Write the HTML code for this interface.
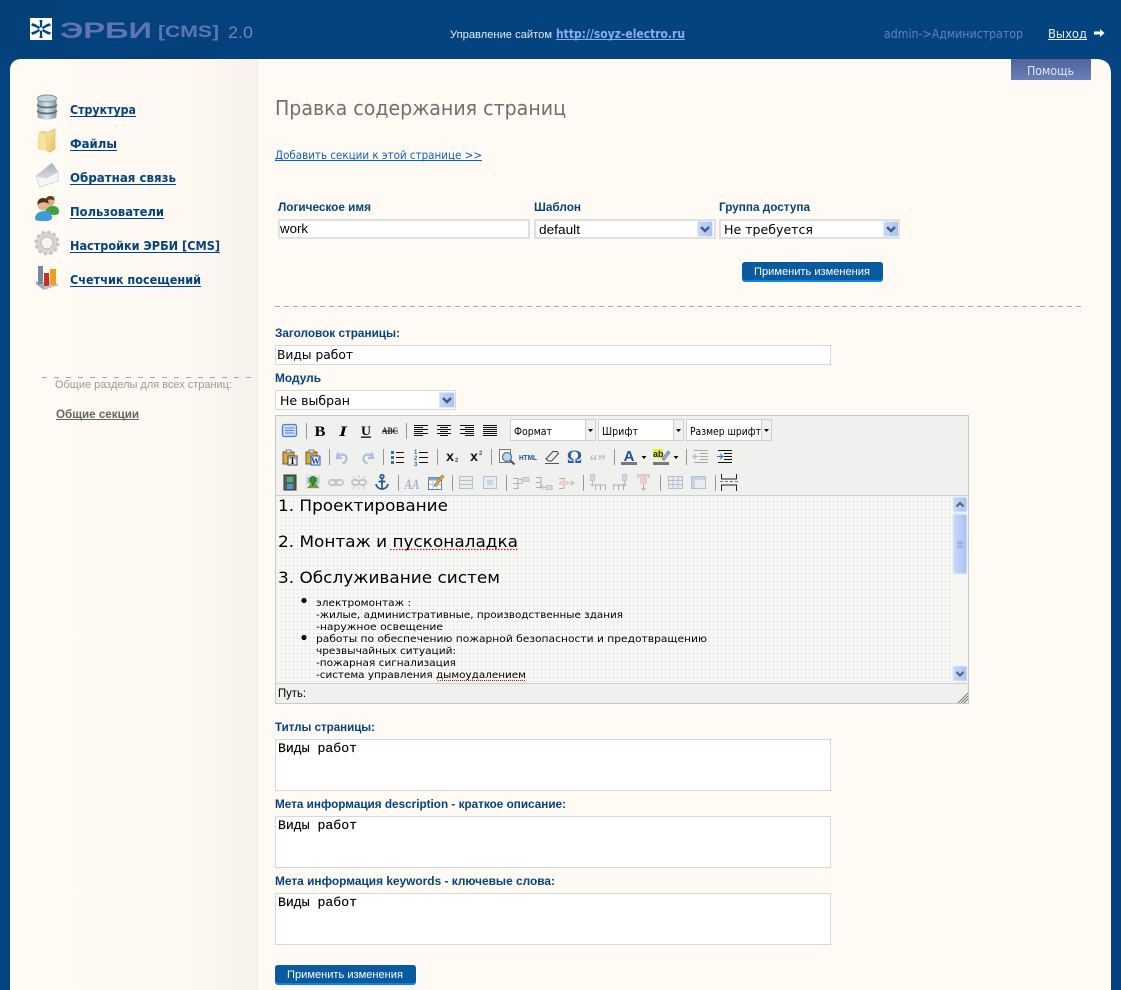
<!DOCTYPE html>
<html><head><meta charset="utf-8"><title>ЭРБИ CMS</title>
<style>
html,body{margin:0;padding:0;background:#03437f;overflow:hidden}
svg{display:block}
text{white-space:pre}
.a{font-family:"Liberation Sans",sans-serif}
.d{font-family:"DejaVu Sans",sans-serif}
.m{font-family:"Liberation Mono",monospace}
.s{font-family:"Liberation Serif",serif}
.lab{font-family:"Liberation Sans",sans-serif;font-weight:bold;font-size:12px;fill:#03437f}
.nav{font-family:"DejaVu Sans",sans-serif;font-weight:bold;font-size:12px;fill:#03437f}
.btn{font-family:"Liberation Sans",sans-serif;font-size:11px;fill:#fff}
.ta{font-family:"Liberation Mono",monospace;font-size:13px;fill:#000;stroke:#000;stroke-width:.15px}
.f{font-family:"DejaVu Sans",sans-serif;font-size:16px;fill:#000}
.sm{font-family:"DejaVu Sans",sans-serif;font-size:10px;fill:#000}
.sel{font-family:"DejaVu Sans",sans-serif;font-size:12px;fill:#000}
.ed{font-family:"DejaVu Sans",sans-serif;font-size:11px;fill:#000}
.dis{opacity:.42}
</style></head><body>
<svg xmlns="http://www.w3.org/2000/svg" width="1121" height="990" viewBox="0 0 1121 990">
<defs>
<linearGradient id="side" x1="0" x2="1" y1="0" y2="0"><stop offset="0" stop-color="#fffaf4"/><stop offset=".72" stop-color="#fdf8f2"/><stop offset="1" stop-color="#f5f1eb"/></linearGradient>
<linearGradient id="help" x1="0" x2="0" y1="0" y2="1"><stop offset="0" stop-color="#50639b"/><stop offset="1" stop-color="#6a80b8"/></linearGradient>
<linearGradient id="sb" x1="0" x2="1" y1="0" y2="0"><stop offset="0" stop-color="#c9daf9"/><stop offset="1" stop-color="#a9c1f1"/></linearGradient>
<linearGradient id="mtl" x1="0" x2="1" y1="0" y2="0"><stop offset="0" stop-color="#8fa3ad"/><stop offset=".5" stop-color="#dde5e9"/><stop offset="1" stop-color="#7f949f"/></linearGradient>
<linearGradient id="fold" x1="0" x2="1" y1="0" y2="1"><stop offset="0" stop-color="#fbe9a8"/><stop offset="1" stop-color="#e4c060"/></linearGradient>
<linearGradient id="env" x1="0" x2="0" y1="0" y2="1"><stop offset="0" stop-color="#a8b0b8"/><stop offset="1" stop-color="#f2f4f6"/></linearGradient>
<pattern id="dots" width="4" height="4" patternUnits="userSpaceOnUse"><rect width="4" height="4" fill="#f8f8f7"/><rect x="1" y="1" width="1" height="1" fill="#d2d2d2"/></pattern>
<symbol id="chev" viewBox="0 0 16 16" overflow="visible"><rect x=".5" y=".5" width="15" height="15" rx="1.500" fill="url(#sb)" stroke="#dfe8fb"/><path d="M4 6 8 10 12 6" fill="none" stroke="#465a80" stroke-width="2.400"/></symbol>
</defs>

<!-- header -->
<rect width="1121" height="990" fill="#03437f"/>
<path d="M0 0H300L210 59H0Z" fill="#04407a"/>
<path d="M60 0H310L230 30 120 59H70Z" fill="#064a88" opacity=".3"/>

<!-- panel -->
<path d="M10 990V71Q10 59 22 59H1096Q1111 59 1111 74V990Z" fill="#fffaf4"/>
<path d="M10 990V71Q10 59 22 59H258V990Z" fill="url(#side)"/>

<!-- logo -->
<rect x="30" y="18" width="22" height="22" fill="#fff"/>
<g fill="#03437f"><path d="M39.500 20h3L41 29zM39.500 38h3L41 29zM32.500 23l-1.500 2.500L41 29zM49.500 35l1.500-2.500L41 29zM49.500 23l1.500 2.500L41 29zM32.500 35 31 32.500 41 29z"/></g>
<g stroke="#03437f" stroke-width="2.200"><path d="M41 20.500V37.500M33.500 24.500 48.500 33.500M48.500 24.500 33.500 33.500"/></g>
<circle cx="41" cy="29" r="1.800" fill="#fff"/>
<text x="60" y="38" class="a" font-size="22" font-weight="bold" fill="#5f74b2" textLength="92" lengthAdjust="spacingAndGlyphs">ЭРБИ</text>
<text x="158" y="37" class="a" font-size="17" font-weight="bold" fill="#5f74b2" textLength="61" lengthAdjust="spacingAndGlyphs">[CMS]</text>
<text x="228" y="38" class="a" font-size="17" fill="#6f84bf" textLength="25" lengthAdjust="spacingAndGlyphs">2.0</text>

<!-- header text -->
<text x="450" y="38" class="a" font-size="11" fill="#e3e9f6" textLength="102" lengthAdjust="spacingAndGlyphs">Управление сайтом</text>
<text x="556" y="38" class="d" font-size="12" font-weight="bold" fill="#8cabf0" textLength="129" lengthAdjust="spacingAndGlyphs">http://soyz-electro.ru</text>
<rect x="556" y="39" width="129" height="1" fill="#8cabf0"/>
<text x="884" y="38" class="d" font-size="12" fill="#6580c0" textLength="139" lengthAdjust="spacingAndGlyphs">admin-&gt;Администратор</text>
<text x="1048" y="38" class="d" font-size="12" fill="#e8eefa" textLength="39" lengthAdjust="spacingAndGlyphs">Выход</text>
<rect x="1048" y="39" width="39" height="1" fill="#e8eefa"/>
<path d="M1094 31.500h6v-2.500l4.500 4-4.500 4v-2.500h-6z" fill="#fff"/>
<rect x="1011" y="59" width="80" height="21" fill="url(#help)"/>
<text x="1027" y="75" class="d" font-size="12" fill="#dfe5f3" textLength="47" lengthAdjust="spacingAndGlyphs">Помощь</text>

<!-- sidebar icons -->
<g><!-- database -->
<path d="M37.500 98.500v18c0 4 19 4 19 0v-18z" fill="url(#mtl)"/>
<ellipse cx="47" cy="98.500" rx="9.500" ry="3.500" fill="#c9d4da" stroke="#7e929d"/>
<path d="M37.500 104.500c0 4 19 4 19 0M37.500 110.500c0 4 19 4 19 0" fill="none" stroke="#56707e" stroke-width="1.800"/>
</g>
<g><!-- folder -->
<path d="M38 134 41 131h5v18l-6 1-2-1z" fill="#f0d47f"/>
<path d="M46 133 55 129v20l-5 3-4-2z" fill="url(#fold)" stroke="#d9b65a" stroke-width=".6"/>
<path d="M38 134H46V150H39Z" fill="#f8e39a"/>
</g>
<g><!-- mail -->
<path d="M36 176 52 163 58 172V181L40 187Z" fill="url(#env)" stroke="#aeb6bd" stroke-width=".5"/>
<path d="M36 176 46 178 58 172V181L40 187Z" fill="#f4f6f8" stroke="#c4cad0" stroke-width=".6"/>
</g>
<g><!-- users -->
<path d="M45 213c0-5 4-7 8-7s6 2 6 6c0 2-2 3-6 3z" fill="#3da23d"/>
<circle cx="50" cy="202" r="4.500" fill="#dcae84"/>
<path d="M45.500 201c0-3 2-5 5-5s4.500 2 4 5c-1-2-6-2-9 0z" fill="#5d3a20"/>
<path d="M35 219c0-6 5-8 10-8s7 3 7 7c0 2-3 3-8 3s-9 0-9-2z" fill="#3f9ad6"/>
<circle cx="43" cy="205" r="5.500" fill="#e2b68c"/>
<path d="M37.500 205c-.5-4 2-7 5.500-7s6 2 5.500 6c-2-2.500-8-2.500-11 1z" fill="#4c2f1a"/>
</g>
<g><!-- gear -->
<circle cx="47" cy="243" r="8.500" fill="none" stroke="#d6d6d6" stroke-width="5"/>
<circle cx="47" cy="243" r="11" fill="none" stroke="#c4c4c4" stroke-width="3" stroke-dasharray="3 2.760"/>
<circle cx="47" cy="243" r="6" fill="#f8f5f0" stroke="#b8b8b8"/>
</g>
<g><!-- chart -->
<path d="M36 284 52 280 59 285 44 290Z" fill="#b8c4cd"/>
<path d="M36 284 44 290V286L36 281Z" fill="#9aa8b3"/>
<rect x="38" y="266" width="5" height="18" fill="#76899a"/>
<rect x="44" y="273" width="5" height="13" fill="#c8311f"/>
<rect x="50" y="269" width="6" height="16" fill="#f0a01e"/>
</g>

<!-- sidebar links -->
<g class="nav">
<text x="70" y="114" class="nav" textLength="66" lengthAdjust="spacingAndGlyphs">Структура</text><rect x="70" y="116" width="66" height="1" fill="#03437f"/>
<text x="70" y="148" class="nav" textLength="47" lengthAdjust="spacingAndGlyphs">Файлы</text><rect x="70" y="150" width="47" height="1" fill="#03437f"/>
<text x="70" y="182" class="nav" textLength="106" lengthAdjust="spacingAndGlyphs">Обратная связь</text><rect x="70" y="184" width="106" height="1" fill="#03437f"/>
<text x="70" y="216" class="nav" textLength="94" lengthAdjust="spacingAndGlyphs">Пользователи</text><rect x="70" y="218" width="94" height="1" fill="#03437f"/>
<text x="70" y="250" class="nav" textLength="150" lengthAdjust="spacingAndGlyphs">Настройки ЭРБИ [CMS]</text><rect x="70" y="252" width="150" height="1" fill="#03437f"/>
<text x="70" y="284" class="nav" textLength="131" lengthAdjust="spacingAndGlyphs">Счетчик посещений</text><rect x="70" y="286" width="131" height="1" fill="#03437f"/>
</g>
<path d="M42 377.500H251" stroke="#a8a8a8" stroke-dasharray="5 7"/>
<text x="55" y="388" class="a" font-size="11" fill="#9a9a9a" textLength="177" lengthAdjust="spacingAndGlyphs">Общие разделы для всех страниц:</text>
<text x="56" y="418" class="a" font-size="12" font-weight="bold" fill="#666" textLength="83" lengthAdjust="spacingAndGlyphs">Общие секции</text>
<rect x="56" y="419" width="83" height="1" fill="#666"/>

<!-- main -->
<text x="275" y="115" class="d" font-size="20" fill="#707070" textLength="291" lengthAdjust="spacingAndGlyphs">Правка содержания страниц</text>
<text x="275" y="159" class="d" font-size="11.500" fill="#0b62c4" textLength="207" lengthAdjust="spacingAndGlyphs">Добавить секции к этой странице &gt;&gt;</text>
<rect x="275" y="160" width="207" height="1" fill="#0b62c4"/>

<text x="278" y="211" class="lab" textLength="93" lengthAdjust="spacingAndGlyphs">Логическое имя</text>
<text x="534" y="211" class="lab" textLength="47" lengthAdjust="spacingAndGlyphs">Шаблон</text>
<text x="719" y="211" class="lab" textLength="91" lengthAdjust="spacingAndGlyphs">Группа доступа</text>

<rect x="279" y="220" width="250" height="18" fill="#fff" stroke="#e0e0e0" stroke-width="2" />
<text x="280" y="233" class="a" font-size="13" fill="#000" textLength="28" lengthAdjust="spacingAndGlyphs">work</text>
<rect x="535" y="220" width="180" height="18" fill="#fff" stroke="#e0e0e0" stroke-width="2"/>
<text x="539" y="234" class="a" font-size="13" fill="#000" textLength="41" lengthAdjust="spacingAndGlyphs">default</text>
<use href="#chev" x="697" y="221" width="16" height="16"/>
<rect x="720" y="220" width="179" height="18" fill="#fff" stroke="#e0e0e0" stroke-width="2"/>
<text x="724" y="234" class="sel" textLength="89" lengthAdjust="spacingAndGlyphs">Не требуется</text>
<use href="#chev" x="883" y="221" width="16" height="16"/>

<rect x="742" y="262" width="141" height="20" rx="3" fill="#0a86e8"/>
<rect x="742" y="262" width="141" height="18" rx="3" fill="#0a5aa0"/>
<text x="754" y="275" class="btn" textLength="116" lengthAdjust="spacingAndGlyphs">Применить изменения</text>

<path d="M275 306.500H1084" stroke="#a9a9a9" stroke-dasharray="5 4"/>

<text x="275" y="337" class="lab" textLength="125" lengthAdjust="spacingAndGlyphs">Заголовок страницы:</text>
<rect x="275.500" y="345.500" width="555" height="19" fill="#fff" stroke="#d8d8d8"/>
<text x="277" y="359" class="sel" textLength="76" lengthAdjust="spacingAndGlyphs">Виды работ</text>
<text x="275" y="382" class="lab" textLength="46" lengthAdjust="spacingAndGlyphs">Модуль</text>
<rect x="275.500" y="390.500" width="180" height="19" fill="#fff" stroke="#d8d8d8"/>
<text x="280" y="405" class="sel" textLength="70" lengthAdjust="spacingAndGlyphs">Не выбран</text>
<use href="#chev" x="439" y="392" width="16" height="16"/>

<!-- editor -->
<rect x="275.500" y="415.500" width="693" height="288" fill="#f0f0ee" stroke="#c8c8c8"/>
<rect x="276" y="495" width="692" height="188" fill="url(#dots)"/>
<path d="M276 495.500H968M276 683.500H968" stroke="#cfcfcf"/>

<!-- separators -->
<path d="M306.500 423v16M406.500 423v16M329.500 449v16M383.500 449v16M437.500 449v16M491.500 449v16M614.500 449v16M686.500 449v16M398.500 475v16M452.500 475v16M506.500 475v16M583.500 475v16M660.500 475v16M715.500 475v16" stroke="#8f9a9f"/>

<!-- row 1 -->
<rect x="282.500" y="424.500" width="14" height="12" rx="2" fill="#cfdcf5" stroke="#4f7fc4" stroke-width="1.300"/>
<path d="M285 428h9M285 430.500h9M285 433h9" stroke="#5a8ad0"/>
<text x="320" y="436" text-anchor="middle" class="s" font-size="15" font-weight="bold" fill="#000" textLength="11" lengthAdjust="spacingAndGlyphs">B</text>
<text x="343" y="436" text-anchor="middle" class="s" font-size="15" font-weight="bold" font-style="italic" fill="#000" textLength="8" lengthAdjust="spacingAndGlyphs">I</text>
<text x="366" y="435" text-anchor="middle" class="s" font-size="13" font-weight="bold" fill="#000" textLength="10" lengthAdjust="spacingAndGlyphs">U</text><rect x="361" y="436.500" width="10" height="1.300" fill="#000"/>
<text x="390" y="434" text-anchor="middle" class="s" font-size="9" font-weight="bold" fill="#222" textLength="16" lengthAdjust="spacingAndGlyphs">ABC</text><rect x="382" y="430.500" width="16" height="1" fill="#222"/>
<g stroke="#111" stroke-width="1" fill="none">
<path d="M414 425.500h14M414 427.500h9M414 429.500h14M414 431.500h9M414 433.500h14M414 435.500h9"/>
<path d="M437 425.500h14M440 427.500h8M437 429.500h14M440 431.500h8M437 433.500h14M440 435.500h8"/>
<path d="M460 425.500h14M465 427.500h9M460 429.500h14M465 431.500h9M460 433.500h14M465 435.500h9"/>
<path d="M483 425.500h14M483 427.500h14M483 429.500h14M483 431.500h14M483 433.500h14M483 435.500h14"/>
</g>
<!-- combos -->
<rect x="510.500" y="419.500" width="75" height="21" fill="#fff" stroke="#cfcfcf"/>
<rect x="585.500" y="419.500" width="10" height="21" fill="#f0f0ee" stroke="#cfcfcf"/>
<path d="M588 429h5l-2.500 3z" fill="#000"/>
<text x="514" y="435" class="ed" textLength="38" lengthAdjust="spacingAndGlyphs">Формат</text>
<rect x="598.500" y="419.500" width="75" height="21" fill="#fff" stroke="#cfcfcf"/>
<rect x="673.500" y="419.500" width="10" height="21" fill="#f0f0ee" stroke="#cfcfcf"/>
<path d="M676 429h5l-2.500 3z" fill="#000"/>
<text x="602" y="435" class="ed" textLength="36" lengthAdjust="spacingAndGlyphs">Шрифт</text>
<rect x="686.500" y="419.500" width="75" height="21" fill="#fff" stroke="#cfcfcf"/>
<rect x="761.500" y="419.500" width="10" height="21" fill="#f0f0ee" stroke="#cfcfcf"/>
<path d="M764 429h5l-2.500 3z" fill="#000"/>
<text x="690" y="435" class="ed" textLength="71" lengthAdjust="spacingAndGlyphs">Размер шрифт</text>

<!-- row 2 -->
<rect x="283" y="452" width="11" height="12" fill="#d8a93c" stroke="#6f5a26"/><rect x="286" y="450" width="5" height="3" fill="#ddd" stroke="#555" stroke-width=".7"/>
<rect x="288" y="456" width="9" height="9" fill="#eee" stroke="#444"/><text x="292.500" y="464" text-anchor="middle" class="s" font-size="9" font-weight="bold" fill="#000">T</text>
<rect x="306" y="452" width="11" height="12" fill="#d8a93c" stroke="#6f5a26"/><rect x="309" y="450" width="5" height="3" fill="#ddd" stroke="#555" stroke-width=".7"/>
<rect x="311" y="456" width="9" height="9" fill="#eef" stroke="#245ea8"/><text x="315.500" y="464" text-anchor="middle" class="s" font-size="9" font-weight="bold" fill="#1a4fa0">W</text>
<g class="dis" fill="none" stroke="#4f7fc0" stroke-width="2.200">
<path d="M338 452.500 337 458h5M337.500 457c3-4 9-3 9 1.500 0 3-2 4.500-4 5"/>
<path d="M372 452.500 373 458h-5M372.500 457c-3-4-9-3-9 1.500 0 3 2 4.500 4 5"/>
</g>
<g fill="#2f6fb5"><rect x="391" y="451" width="3" height="3"/><rect x="391" y="456" width="3" height="3"/><rect x="391" y="461" width="3" height="3"/></g>
<path d="M396 452.500h8M396 457.500h8M396 462.500h8" stroke="#111"/>
<g class="a" font-size="6" font-weight="bold" fill="#2f6fb5"><text x="414" y="454">1</text><text x="414" y="460">2</text><text x="414" y="466">3</text></g>
<path d="M419 452.500h9M419 457.500h9M419 462.500h9" stroke="#111"/>
<text x="450" y="461" text-anchor="middle" class="a" font-size="14" font-weight="bold" fill="#111">x</text><text x="455" y="462" class="a" font-size="6" font-weight="bold" fill="#2f5f9f">2</text>
<text x="474" y="461" text-anchor="middle" class="a" font-size="14" font-weight="bold" fill="#111">x</text><text x="479" y="455" class="a" font-size="6" font-weight="bold" fill="#2f5f9f">2</text>
<rect x="499.500" y="449.500" width="11" height="13" fill="#fff" stroke="#777"/>
<circle cx="507" cy="457" r="4.500" fill="#bcd6ee" stroke="#4a7a9c" stroke-width="1.300"/><path d="M510 460l4.500 4.500" stroke="#555" stroke-width="2"/>
<text x="528" y="460" text-anchor="middle" class="a" font-size="7.500" font-weight="bold" fill="#1d4f94" textLength="18" lengthAdjust="spacingAndGlyphs">HTML</text>
<path d="M546 459 553 451.500h4l1.500 2-7 7.500h-3l-1.500-1.500z" fill="#eee" stroke="#444"/><path d="M545 463.500h14" stroke="#555"/>
<text x="574.500" y="463" text-anchor="middle" class="s" font-size="19" font-weight="bold" fill="#2a5fa8">Ω</text>
<text x="597.500" y="466" text-anchor="middle" class="s dis" font-size="17" font-weight="bold" fill="#5a7faf" textLength="16" lengthAdjust="spacingAndGlyphs">“”</text>
<text x="629" y="461" text-anchor="middle" class="a" font-size="15" font-weight="bold" fill="#2a4f90">A</text><rect x="621" y="462" width="16" height="3" fill="#777"/>
<path d="M641.500 456h5l-2.500 3z" fill="#000"/>
<rect x="653" y="449" width="10" height="9" fill="#ecec40"/><text x="653" y="457" class="a" font-size="9" font-weight="bold" fill="#222">ab</text>
<path d="M662 459 668 451l2 1.500-6 8z" fill="#9fb7d8" stroke="#4a5a70" stroke-width=".6"/><rect x="653" y="462" width="16" height="3" fill="#777"/>
<path d="M673.500 456h5l-2.500 3z" fill="#000"/>
<g class="dis"><path d="M694 450.500h14M700 453.500h8M700 456.500h8M700 459.500h8M694 462.500h14" stroke="#444"/><path d="M699 456.500h-5M696 454l-3 2.500 3 2.500" stroke="#2a6fc0" fill="none"/></g>
<path d="M718 450.500h14M724 453.500h8M724 456.500h8M724 459.500h8M718 462.500h14" stroke="#111"/><path d="M717 456.500h5M720 454l3 2.500-3 2.500" stroke="#2a6fc0" fill="none"/>

<!-- row 3 -->
<rect x="284" y="475" width="12" height="15" fill="#5a5f55" stroke="#333"/><rect x="287" y="477" width="6" height="5" fill="#45b46c"/><rect x="287" y="484" width="6" height="5" fill="#4a9ad0"/>
<rect x="306.500" y="475.500" width="13" height="13" fill="#fff" stroke="#ddd"/><path d="M307 477h12v7h-12z" fill="#9ccdf0"/><path d="M307 488l3-4h7l2 4z" fill="#6aa436"/><circle cx="313" cy="480" r="4" fill="#3d8a2a"/><rect x="312" y="483" width="2" height="3" fill="#7a5a28"/>
<g class="dis" fill="none" stroke="#8a8f96" stroke-width="2"><rect x="329" y="480" width="8" height="5" rx="2.500"/><rect x="335" y="480" width="8" height="5" rx="2.500"/><rect x="352" y="480" width="7" height="5" rx="2.500"/><rect x="359" y="480" width="7" height="5" rx="2.500"/><path d="M359 475v3M359 487v3M353 476l2 3M365 476l-2 3M353 489l2-3M365 489l-2-3" stroke-width="1"/></g>
<g fill="none" stroke="#24598f" stroke-width="1.700"><circle cx="382" cy="476.500" r="1.800"/><path d="M382 478.500V489M378.500 481.500h7M376 484c.5 3 3 5 6 5s5.500-2 6-5"/></g>
<text x="412" y="489" text-anchor="middle" class="s dis" font-size="15" font-weight="bold" font-style="italic" fill="#3c5a9f" textLength="15" lengthAdjust="spacingAndGlyphs">AA</text>
<rect x="428.500" y="477.500" width="13" height="12" fill="#fff" stroke="#5f7fa8"/><rect x="428.500" y="477.500" width="13" height="3" fill="#7fa3d0"/><path d="M433 481v8M437 481v8M429 484.500h12" stroke="#a8c0da"/><path d="M435 484l7-9 1.800 1.500-7 9-2.500 1z" fill="#e8b23c" stroke="#7a5a1c" stroke-width=".6"/>
<g class="dis">
<rect x="459.500" y="476.500" width="13" height="12" fill="#dfe8f4" stroke="#5f7fa8"/><path d="M460 480.500h12M460 484.500h12" stroke="#5f7fa8"/>
<rect x="483.500" y="476.500" width="13" height="12" fill="#dfe8f4" stroke="#5f7fa8"/><rect x="487" y="480" width="6" height="5" fill="#8fb0dc"/>
<path d="M513 478.500h5v10h-5M513 483.500h5" fill="none" stroke="#555"/>
<path d="M522 477.500h7v4h-7z" fill="#9fc0e4" stroke="#6a8fb5"/><path d="M518 483.500h4v-2M522 479.500h-3" fill="none" stroke="#777"/>
<path d="M536 477.500h5v10h-5M536 482.500h5" fill="none" stroke="#555"/>
<path d="M546 485.500h6v4h-6z" fill="#9fc0e4" stroke="#6a8fb5"/><path d="M541 487.500h5M543 485.500l-2 2 2 2" fill="none" stroke="#777"/>
<path d="M559 478.500h5v10h-5M559 483.500h5" fill="none" stroke="#555"/><rect x="560" y="481" width="8" height="4" fill="#e8a0a0"/><path d="M568 483h6M571 481l3 2-3 2" fill="none" stroke="#777"/>
<path d="M590.500 474.500h4v6h-4z" fill="#9fc0e4" stroke="#6a8fb5"/><path d="M592.500 481v5M590.500 484l2 2 2-2" fill="none" stroke="#777"/><path d="M595.500 490v-5h10v5M600.500 485v5" fill="none" stroke="#555"/>
<path d="M622.500 474.500h4v6h-4z" fill="#9fc0e4" stroke="#6a8fb5"/><path d="M624.500 481v5M622.500 484l2 2 2-2" fill="none" stroke="#777"/><path d="M613.500 490v-5h10v5M618.500 485v5" fill="none" stroke="#555"/>
<path d="M638 478v-3h11v3M643.500 484v6M641.500 488l2 2 2-2" fill="none" stroke="#555"/><rect x="640" y="476" width="7" height="8" fill="#e8a0a0"/>
<rect x="668.500" y="476.500" width="14" height="12" fill="#dfe8f4" stroke="#5f7fa8"/><path d="M673 477v11M678 477v11M669 480.500h14M669 484.500h14" stroke="#5f7fa8"/>
<rect x="691.500" y="476.500" width="14" height="12" fill="#dfe8f4" stroke="#5f7fa8"/><rect x="692" y="477" width="13" height="3" fill="#8fb0dc"/><rect x="692" y="477" width="3" height="11" fill="#8fb0dc"/>
</g>
<path d="M721.500 474v5h15v-5M721.500 491v-6h15v6" fill="none" stroke="#222"/><path d="M720 481.500h3M725 481.500h3M730 481.500h3M735 481.500h3" stroke="#777"/>

<!-- editor content -->
<text x="278" y="511" class="f" textLength="170" lengthAdjust="spacingAndGlyphs">1. Проектирование</text>
<text x="278" y="547" class="f" textLength="240" lengthAdjust="spacingAndGlyphs">2. Монтаж и пусконаладка</text>
<text x="278" y="583" class="f" textLength="222" lengthAdjust="spacingAndGlyphs">3. Обслуживание систем</text>
<path d="M390 549.500H518" stroke="#e01010" stroke-width="1.300" stroke-dasharray="1.500 1.500"/>
<circle cx="304" cy="600.500" r="2.600" fill="#000"/>
<circle cx="304" cy="637.500" r="2.600" fill="#000"/>
<text x="316" y="606" class="sm" textLength="95" lengthAdjust="spacingAndGlyphs">электромонтаж :</text>
<text x="316" y="618" class="sm" textLength="307" lengthAdjust="spacingAndGlyphs">-жилые, административные, производственные здания</text>
<text x="316" y="630" class="sm" textLength="127" lengthAdjust="spacingAndGlyphs">-наружное освещение</text>
<text x="316" y="642" class="sm" textLength="391" lengthAdjust="spacingAndGlyphs">работы по обеспечению пожарной безопасности и предотвращению</text>
<text x="316" y="654" class="sm" textLength="140" lengthAdjust="spacingAndGlyphs">чрезвычайных ситуаций:</text>
<text x="316" y="666" class="sm" textLength="140" lengthAdjust="spacingAndGlyphs">-пожарная сигнализация</text>
<text x="316" y="678" class="sm" textLength="210" lengthAdjust="spacingAndGlyphs">-система управления дымоудалением</text>
<path d="M438 680.500H526" stroke="#e01010" stroke-dasharray="1 1"/>

<!-- scrollbar -->
<rect x="952" y="496" width="16" height="187" fill="#f5f5f2"/>
<rect x="953" y="497" width="14" height="15" rx="1.500" fill="url(#sb)" stroke="#e4ecfb"/>
<path d="M956.500 506.500 960 503 963.500 506.500" fill="none" stroke="#4d6185" stroke-width="2"/>
<rect x="953" y="514" width="14" height="60" rx="1.500" fill="url(#sb)" stroke="#e4ecfb"/>
<path d="M957 541.500h6M957 543.500h6M957 545.500h6M957 547.500h6" stroke="#8ba7dc"/>
<rect x="953" y="666" width="14" height="15" rx="1.500" fill="url(#sb)" stroke="#e4ecfb"/>
<path d="M956.500 672 960 675.500 963.500 672" fill="none" stroke="#4d6185" stroke-width="2"/>

<text x="278" y="697" class="a" font-size="12" fill="#000" textLength="28" lengthAdjust="spacingAndGlyphs">Путь:</text>
<path d="M958 703 968 693M961 703 968 696M964 703 968 699" stroke="#777"/>

<!-- meta -->
<text x="275" y="731" class="lab" textLength="100" lengthAdjust="spacingAndGlyphs">Титлы страницы:</text>
<rect x="275.500" y="739.500" width="555" height="51" fill="#fff" stroke="#d8d8d8"/>
<text x="278" y="752" class="ta" textLength="79" lengthAdjust="spacingAndGlyphs">Виды работ</text>
<text x="275" y="808" class="lab" textLength="291" lengthAdjust="spacingAndGlyphs">Мета информация description - краткое описание:</text>
<rect x="275.500" y="816.500" width="555" height="51" fill="#fff" stroke="#d8d8d8"/>
<text x="278" y="829" class="ta" textLength="79" lengthAdjust="spacingAndGlyphs">Виды работ</text>
<text x="275" y="885" class="lab" textLength="280" lengthAdjust="spacingAndGlyphs">Мета информация keywords - ключевые слова:</text>
<rect x="275.500" y="893.500" width="555" height="51" fill="#fff" stroke="#d8d8d8"/>
<text x="278" y="906" class="ta" textLength="79" lengthAdjust="spacingAndGlyphs">Виды работ</text>

<rect x="275" y="965" width="141" height="20" rx="3" fill="#0a86e8"/>
<rect x="275" y="965" width="141" height="18" rx="3" fill="#0a5aa0"/>
<text x="287" y="978" class="btn" textLength="116" lengthAdjust="spacingAndGlyphs">Применить изменения</text>
</svg>
</body></html>
